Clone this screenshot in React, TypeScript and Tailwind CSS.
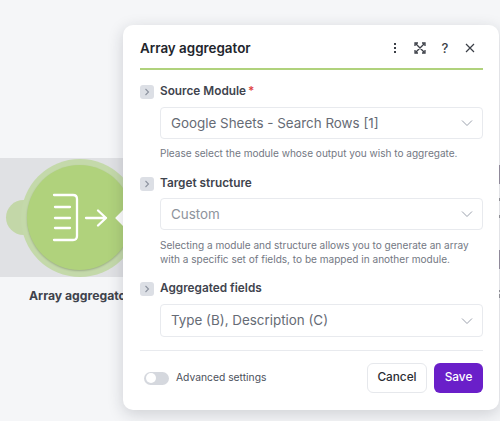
import React from "react";

const font = { fontFamily: "Inter, sans-serif" };

function Chevron() {
  return (
    <svg width="16" height="16" viewBox="0 0 16 16" fill="none" stroke="#9ba1ad" strokeWidth="1" className="shrink-0">
      <path d="M3 5.5 L8 10.5 L13 5.5" />
    </svg>
  );
}

function Expander() {
  return (
    <span className="flex h-[14px] w-[14px] shrink-0 items-center justify-center rounded-[3px] bg-[#dcdfe5]">
      <svg width="8" height="8" viewBox="0 0 8 8" fill="none" stroke="#8d939f" strokeWidth="1.1">
        <path d="M2.5 1 L5.5 4 L2.5 7" />
      </svg>
    </span>
  );
}

function Field({ label, required, value, muted, help, selectClass, helpClass }: { label: string; required?: boolean; value: string; muted?: boolean; help?: string[]; selectClass: string; helpClass?: string }) {
  return (
    <div>
      <div className="flex h-[20px] items-center gap-[6px]">
        <Expander />
        <span className="text-[11.8px] font-semibold text-[#3f444e]">
          {label}
          {required && <span className="ml-[2px] text-[#e0433f]">*</span>}
        </span>
      </div>
      <div className="ml-[20px]">
        <div className={`flex items-center justify-between rounded-[4px] border border-[#e8eaee] bg-white pl-[10px] pr-[7px] ${selectClass}`}>
          <span className={`text-[13.4px] ${muted ? "text-[#8e939c]" : "text-[#666b75]"}`}>{value}</span>
          <Chevron />
        </div>
        {help && (
          <div className={`text-[10.05px] leading-[14px] text-[#737883] ${helpClass}`}>
            {help.map((l) => (
              <div key={l}>{l}</div>
            ))}
          </div>
        )}
      </div>
    </div>
  );
}

export default function App() {
  return (
    <div style={font} className="relative h-[421px] w-[500px] overflow-hidden bg-[#f5f6f8]">
      {/* canvas module */}
      <div className="absolute left-0 top-[158px] h-[119px] w-[125px] bg-[#e0e1e4]" />
      <div className="absolute left-[6px] top-[200px] h-[35px] w-[35px] rounded-full bg-[#c3d7a8]" />
      <div className="absolute left-[21px] top-[159px] h-[118px] w-[118px] rounded-full bg-[#c4d9aa]" />
      <div className="absolute left-[27px] top-[165px] h-[105px] w-[105px] rounded-full bg-[#b0d27c] shadow-[0_1px_2px_rgba(0,0,0,0.2)]" />
      <svg className="absolute left-[50px] top-[190px]" width="62" height="56" viewBox="0 0 62 56" fill="none" stroke="white" strokeWidth="2.3" strokeLinecap="round" strokeLinejoin="round">
        <path d="M4 5 H23 Q27 5 27 9 V46 Q27 50 23 50 H4" />
        <path d="M5 17 H20 M5 28 H20 M5 38 H20" />
        <path d="M36 28 H56 M48 20.5 L56 28 L48 35.5" />
      </svg>
      <div className="absolute left-[29px] top-[287px] whitespace-nowrap text-[12.2px] font-bold text-[#3f434c]">Array aggregator</div>
      <div className="absolute left-[118px] top-[211px] h-[14px] w-[14px] rotate-45 bg-white" />
      {/* right-edge fragments */}
      <div className="absolute right-0 top-[165px] h-[19px] w-[1px] bg-[#9a94a4]" />
      <div className="absolute right-0 top-[198px] h-[3px] w-[1px] bg-[#9a9aa0]" />
      <div className="absolute right-0 top-[215px] h-[3px] w-[1px] bg-[#9a9aa0]" />
      <div className="absolute right-0 top-[250px] h-[19px] w-[1px] bg-[#9a94a4]" />
      <div className="absolute right-0 top-[290px] h-[2px] w-[1px] bg-[#9a9aa0]" />
      <div className="absolute right-0 top-[294px] h-[4px] w-[1px] bg-[#9a9aa0]" />

      {/* dialog */}
      <div className="absolute left-[123px] top-[25px] flex h-[385px] w-[376px] flex-col rounded-[10px] bg-white pl-[17px] pr-[16px] shadow-[0_4px_16px_rgba(30,35,50,0.18)]">
        <div className="flex h-[45px] shrink-0 items-center justify-between border-b-2 border-[#b0d27c] pt-[3px]">
          <span className="text-[13.4px] font-semibold text-[#22252c]">Array aggregator</span>
          <div className="flex items-center gap-[13px] pr-[7px] text-[#3b3f47]">
            <svg width="12" height="12" viewBox="0 0 12 12" fill="#3b3f47"><rect x="5" y="1" width="2" height="2" /><rect x="5" y="5" width="2" height="2" /><rect x="5" y="9" width="2" height="2" /></svg>
            <svg width="12" height="12" viewBox="0 0 12 12" fill="none" stroke="#3b3f47" strokeWidth="1.3"><path d="M1 4 V1 H4 M8 1 H11 V4 M11 8 V11 H8 M4 11 H1 V8 M2 2 L10 10 M10 2 L2 10" /></svg>
            <span className="w-[12px] text-center text-[13px] font-medium leading-none">?</span>
            <svg width="12" height="12" viewBox="0 0 12 12" fill="none" stroke="#3b3f47" strokeWidth="1.2"><path d="M2 2 L10 10 M10 2 L2 10" /></svg>
          </div>
        </div>
        <div className="mt-[12px] flex flex-col">
          <Field label="Source Module" required value="Google Sheets - Search Rows [1]" selectClass="mt-[5px] h-[32px]" helpClass="mt-[7px]" help={["Please select the module whose output you wish to aggregate."]} />
          <div className="mt-[14px]">
            <Field label="Target structure" muted value="Custom" selectClass="mt-[4px] h-[32px]" helpClass="mt-[8px]" help={["Selecting a module and structure allows you to generate an array", "with a specific set of fields, to be mapped in another module."]} />
          </div>
          <div className="mt-[13px]">
            <Field label="Aggregated fields" value="Type (B), Description (C)" selectClass="mt-[5px] h-[33px]" />
          </div>
        </div>
        <div className="mt-[13px] flex items-center justify-between border-t border-[#e8eaee] pt-[12px]">
          <div className="flex items-center gap-[7px] pl-[4px]">
            <span className="flex h-[13px] w-[25px] items-center rounded-full bg-[#d5d8de] p-[2px]">
              <span className="h-[10px] w-[10px] rounded-full bg-white" />
            </span>
            <span className="text-[10.3px] text-[#4c515b]">Advanced settings</span>
          </div>
          <div className="flex items-center gap-[7px]">
            <button className="h-[30px] w-[60px] rounded-[6px] border border-[#e6e8ec] bg-white text-[11.8px] font-medium text-[#2a2d34]">Cancel</button>
            <button className="h-[30px] w-[49px] rounded-[6px] bg-[#6a1fc9] text-[11.8px] font-medium text-white">Save</button>
          </div>
        </div>
      </div>
    </div>
  );
}
